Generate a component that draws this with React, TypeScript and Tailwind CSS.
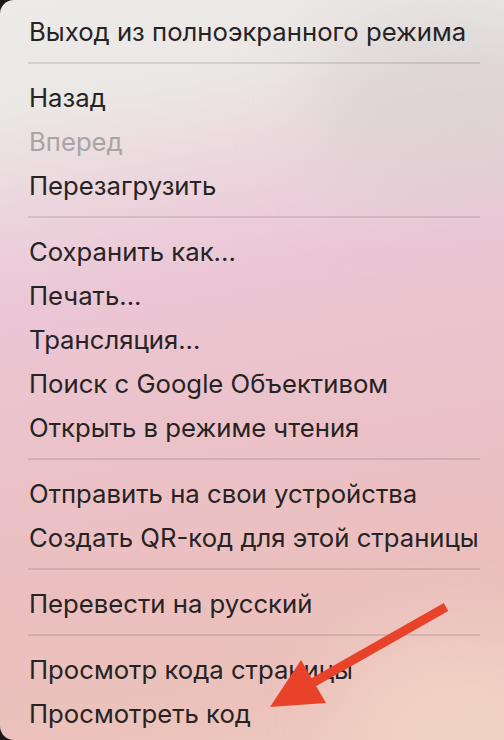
import React from "react"

type Item = { label: string; disabled?: boolean } | "sep"

const items: Item[] = [
  { label: "Выход из полноэкранного режима" },
  "sep",
  { label: "Назад" },
  { label: "Вперед", disabled: true },
  { label: "Перезагрузить" },
  "sep",
  { label: "Сохранить как..." },
  { label: "Печать..." },
  { label: "Трансляция..." },
  { label: "Поиск с Google Объективом" },
  { label: "Открыть в режиме чтения" },
  "sep",
  { label: "Отправить на свои устройства" },
  { label: "Создать QR-код для этой страницы" },
  "sep",
  { label: "Перевести на русский" },
  "sep",
  { label: "Просмотр кода страницы" },
  { label: "Просмотреть код" },
]

function Arrow() {
  return (
    <svg
      className="pointer-events-none absolute left-0 top-0"
      width="504"
      height="740"
      viewBox="0 0 504 740"
    >
      <line x1="446" y1="607" x2="300" y2="690" stroke="#e8432a" strokeWidth="9" />
      <polygon points="270,707 301,660 326,703" fill="#e8432a" />
    </svg>
  )
}

export default function App() {
  return (
    <div className="relative h-[740px] w-[504px] overflow-hidden bg-[#1a1a1a]">
      <div className="relative h-full w-full overflow-hidden rounded-tl-[14px] rounded-bl-[14px] bg-[linear-gradient(170deg,#ecebe8_0%,#ebe7e5_14%,#ecd3dc_27%,#ebc6d5_38%,#ebc2c9_56%,#ebbfbf_74%,#ecc2bb_90%,#eecbbf_100%)]">
        <div className="absolute right-[-70px] top-[10px] h-[190px] w-[260px] rounded-full bg-[#d6d0cf] opacity-60 blur-[40px]" />
        <div className="absolute bottom-[-60px] right-[-60px] h-[160px] w-[220px] rounded-full bg-[#f2d8c8] opacity-70 blur-[40px]" />
        <div className="relative flex flex-col pt-[10px] font-['Inter','Noto_Sans',sans-serif] text-[25.7px] text-[#262324]">
          {items.map((it, i) =>
            it === "sep" ? (
              <div key={i} className="h-[22px] px-[28px] pt-[8px]">
                <div className="h-[2px] w-[452px] bg-[#000]/10" />
              </div>
            ) : (
              <div
                key={i}
                className={`flex h-[44px] items-center whitespace-nowrap pl-[29px] ${it.disabled ? "text-[#a9a3a5]" : ""}`}
              >
                {it.label}
              </div>
            ),
          )}
        </div>
        <Arrow />
      </div>
    </div>
  )
}
